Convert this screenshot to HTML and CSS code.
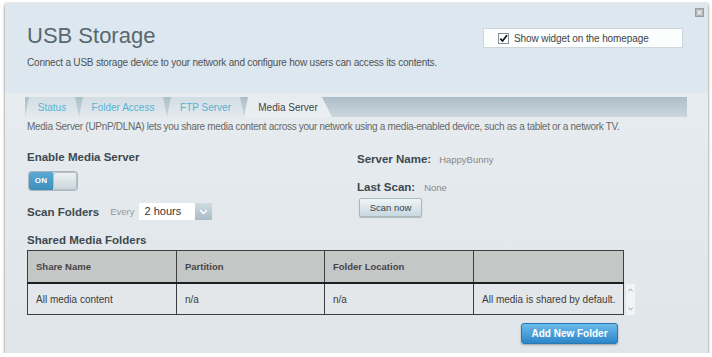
FILE: index.html
```html
<!DOCTYPE html>
<html>
<head>
<meta charset="utf-8">
<title>USB Storage</title>
<link rel="stylesheet" href="styles.css">
</head>
<body>
<div class="panel">
  <span class="close" aria-label="Close">
    <svg width="9" height="9" viewBox="0 0 9 9"><rect x="0.5" y="0.5" width="8" height="8" fill="#b3b6b8" stroke="#9a9ea1"/><path d="M2.5 2.5 L6.5 6.5 M6.5 2.5 L2.5 6.5" stroke="#eef1f3" stroke-width="1.3"/></svg>
  </span>
  <header class="header">
    <div class="head-left">
      <h1 class="title">USB Storage</h1>
      <p class="intro">Connect a USB storage device to your network and configure how users can access its contents.</p>
    </div>
    <label class="widget">
      <span class="cb"><svg width="11" height="11" viewBox="0 0 11 11"><rect x="0.5" y="0.5" width="10" height="10" fill="#fff" stroke="#8a8f93"/><path d="M2.3 5.6 L4.5 8 L9 2.2" fill="none" stroke="#111" stroke-width="1.7"/></svg></span>
      <span class="widget-text">Show widget on the homepage</span>
    </label>
  </header>
  <main class="body">
    <nav class="tabbar">
      <span class="tab t-status">Status</span>
      <span class="tab t-folder">Folder Access</span>
      <span class="tab t-ftp">FTP Server</span>
      <span class="tab t-media active">Media Server</span>
    </nav>
    <p class="desc">Media Server (UPnP/DLNA) lets you share media content across your network using a media-enabled device, such as a tablet or a network TV.</p>
    <div class="cols">
      <div class="col-left">
        <div class="label">Enable Media Server</div>
        <div class="toggle"><span class="on">ON</span><span class="knob"></span></div>
        <div class="scanrow">
          <span class="label">Scan Folders</span>
          <span class="every">Every</span>
          <span class="select">
            <span class="sel-val">2 hours</span>
            <span class="sel-btn"><svg width="9" height="6" viewBox="0 0 9 6"><path d="M1 1 L4.5 4.5 L8 1" fill="none" stroke="#fff" stroke-width="1.4"/></svg></span>
          </span>
        </div>
      </div>
      <div class="col-right">
        <div class="kv"><span class="label">Server Name:</span><span class="val">HappyBunny</span></div>
        <div class="kv kv-scan"><span class="label">Last Scan:</span><span class="val">None</span></div>
        <button class="scan-btn">Scan now</button>
      </div>
    </div>
    <div class="label shared">Shared Media Folders</div>
    <div class="table-wrap">
      <table class="folders">
        <colgroup>
          <col class="c1"><col class="c2"><col class="c3"><col class="c4">
        </colgroup>
        <thead>
          <tr><th>Share Name</th><th>Partition</th><th>Folder Location</th><th></th></tr>
        </thead>
        <tbody>
          <tr><td>All media content</td><td>n/a</td><td>n/a</td><td>All media is shared by default.</td></tr>
        </tbody>
      </table>
      <div class="scroll">
        <svg width="5" height="4" viewBox="0 0 5 4"><path d="M0.5 3.5 L2.5 0.8 L4.5 3.5" fill="none" stroke="#9aa0a4" stroke-width="0.9"/></svg>
        <svg width="5" height="4" viewBox="0 0 5 4"><path d="M0.5 0.5 L2.5 3.2 L4.5 0.5" fill="none" stroke="#9aa0a4" stroke-width="0.9"/></svg>
      </div>
    </div>
    <div class="actions"><button class="add-btn">Add New Folder</button></div>
  </main>
</div>
</body>
</html>
```
FILE: styles.css
```css
html, body {
  margin: 0;
  padding: 0;
  background: #ffffff;
}
body {
  padding: 3px 0 0 5px;
  font-family: "Liberation Sans", Arial, Helvetica, sans-serif;
}
.panel {
  position: relative;
  width: 703px;
  height: 350px;
  display: flex;
  flex-direction: column;
  box-shadow: 0 2px 3px rgba(0,0,0,0.45), 0 0 1px rgba(0,0,0,0.35);
  background: linear-gradient(#e9eef1, #dfe5e9);
}
.close {
  position: absolute;
  left: 690px;
  top: 5px;
  width: 9px;
  height: 9px;
  display: block;
  line-height: 0;
}
.header {
  height: 90px;
  box-sizing: border-box;
  padding: 20px 25px 0 22px;
  background: #dde7ef;
  display: flex;
  justify-content: space-between;
  align-items: flex-start;
}
.title {
  margin: 0;
  font-size: 22px;
  line-height: 26px;
  font-weight: normal;
  color: #58686f;
}
.intro {
  margin: 7px 0 0;
  font-size: 10px;
  line-height: 14px;
  letter-spacing: -0.2px;
  color: #4e5356;
}
.widget {
  margin-top: 5px;
  width: 200px;
  height: 20px;
  box-sizing: border-box;
  border: 1px solid #ccd5db;
  background: #fcfdfd;
  display: flex;
  align-items: center;
  padding-left: 14px;
  gap: 5px;
}
.cb {
  width: 11px;
  height: 11px;
  line-height: 0;
}
.widget-text {
  font-size: 10px;
  letter-spacing: -0.1px;
  color: #444;
}
.body {
  flex: 1;
  padding: 4px 21px 0 22px;
  display: flex;
  flex-direction: column;
  align-items: flex-start;
}
.tabbar {
  margin-left: -2px;
  align-self: stretch;
  height: 20px;
  background: linear-gradient(#adbec8, #cbd7de);
  display: flex;
}
.tab {
  height: 20px;
  line-height: 21px;
  font-size: 10px;
  text-align: center;
  color: #58b2d3;
  background: linear-gradient(#d2dde3, #e3eaee);
  clip-path: polygon(4px 0, calc(100% - 4px) 0, 100% 100%, 0 100%);
}
.t-status { width: 54px; }
.t-folder { width: 88px; }
.t-ftp { width: 77px; }
.t-media { width: 88px; }
.tab.active {
  color: #444;
  background: linear-gradient(#e6ecef, #eaeff2);
  clip-path: polygon(4px 0, calc(100% - 10px) 0, 100% 100%, 0 100%);
}
.desc {
  margin: 3px 0 0;
  font-size: 10px;
  line-height: 14px;
  letter-spacing: -0.3px;
  color: #66696c;
}
.label {
  font-size: 11.5px;
  line-height: 14px;
  font-weight: bold;
  color: #3e4850;
}
.cols {
  margin-top: 16px;
  display: flex;
}
.col-left {
  width: 330px;
  display: flex;
  flex-direction: column;
  align-items: flex-start;
}
.toggle {
  margin: 8px 0 0 2px;
  width: 48px;
  height: 18px;
  display: flex;
  border-radius: 3px;
  overflow: hidden;
  box-shadow: 0 0 0 1px #a9b6bd;
}
.on {
  width: 24px;
  background: linear-gradient(#5aa9d3, #3d8fbd);
  color: #fff;
  font-size: 8px;
  font-weight: bold;
  line-height: 18px;
  text-align: center;
  letter-spacing: 0.2px;
}
.knob {
  width: 24px;
  background: linear-gradient(#eef2f4, #c9d4da);
  border-radius: 3px;
  box-shadow: inset 0 0 0 1px #b3c0c7;
}
.scanrow {
  margin-top: 13px;
  height: 17px;
  display: flex;
  align-items: center;
}
.every {
  margin-left: 11px;
  font-size: 9.5px;
  color: #999;
}
.select {
  margin-left: 4px;
  display: flex;
  height: 17px;
}
.sel-val {
  width: 56px;
  box-sizing: border-box;
  padding-left: 6px;
  background: #fff;
  font-size: 11px;
  line-height: 17px;
  color: #333;
}
.sel-btn {
  width: 17px;
  background: linear-gradient(#cfdbe1, #a9bcc6);
  display: flex;
  align-items: center;
  justify-content: center;
}
.col-right {
  margin-top: 2px;
  display: flex;
  flex-direction: column;
  align-items: flex-start;
}
.kv {
  display: flex;
  align-items: baseline;
  gap: 8px;
}
.kv-scan {
  margin-top: 14px;
  gap: 9px;
}
.val {
  font-size: 9.5px;
  color: #888;
}
.scan-btn {
  margin: 4px 0 0 2px;
  width: 63px;
  height: 19px;
  padding: 0;
  border: 1px solid #a8b8c0;
  border-radius: 2px;
  background: linear-gradient(#eff5f7, #c8d8df);
  box-shadow: 0 1px 1px rgba(0,0,0,0.2);
  font-family: inherit;
  font-size: 9.5px;
  color: #34434c;
}
.shared {
  margin-top: 13px;
}
.table-wrap {
  margin-top: 3px;
  display: flex;
}
.folders {
  width: 596px;
  border-collapse: collapse;
  table-layout: fixed;
  font-size: 10px;
}
.c1 { width: 149px; }
.c2 { width: 148px; }
.c3 { width: 149px; }
.c4 { width: 150px; }
.folders th, .folders td {
  border: 1px solid #3d3d3d;
  text-align: left;
  padding: 0 0 0 8px;
  white-space: nowrap;
  overflow: hidden;
}
.folders th {
  height: 31px;
  background: #c5c6c6;
  font-weight: bold;
  font-size: 9.5px;
  color: #454545;
  border-bottom: 2px solid #1e1e1e;
}
.folders td {
  height: 30px;
  background: #e3e7ea;
  color: #3c3c3c;
}
.scroll {
  align-self: flex-end;
  margin-left: 2px;
  width: 9px;
  height: 31px;
  background: #f3f4f5;
  display: flex;
  flex-direction: column;
  justify-content: space-between;
  align-items: center;
  padding: 4px 0;
  box-sizing: border-box;
}
.actions {
  margin-top: 8px;
  width: 591px;
  display: flex;
  justify-content: flex-end;
}
.add-btn {
  width: 97px;
  height: 21px;
  padding: 0;
  border: 1px solid #2b78b2;
  border-radius: 3px;
  background: linear-gradient(#6cbbea, #2c86c8);
  box-shadow: 0 1px 2px rgba(0,0,0,0.3);
  font-family: inherit;
  font-size: 10px;
  font-weight: bold;
  color: #fff;
}
```
